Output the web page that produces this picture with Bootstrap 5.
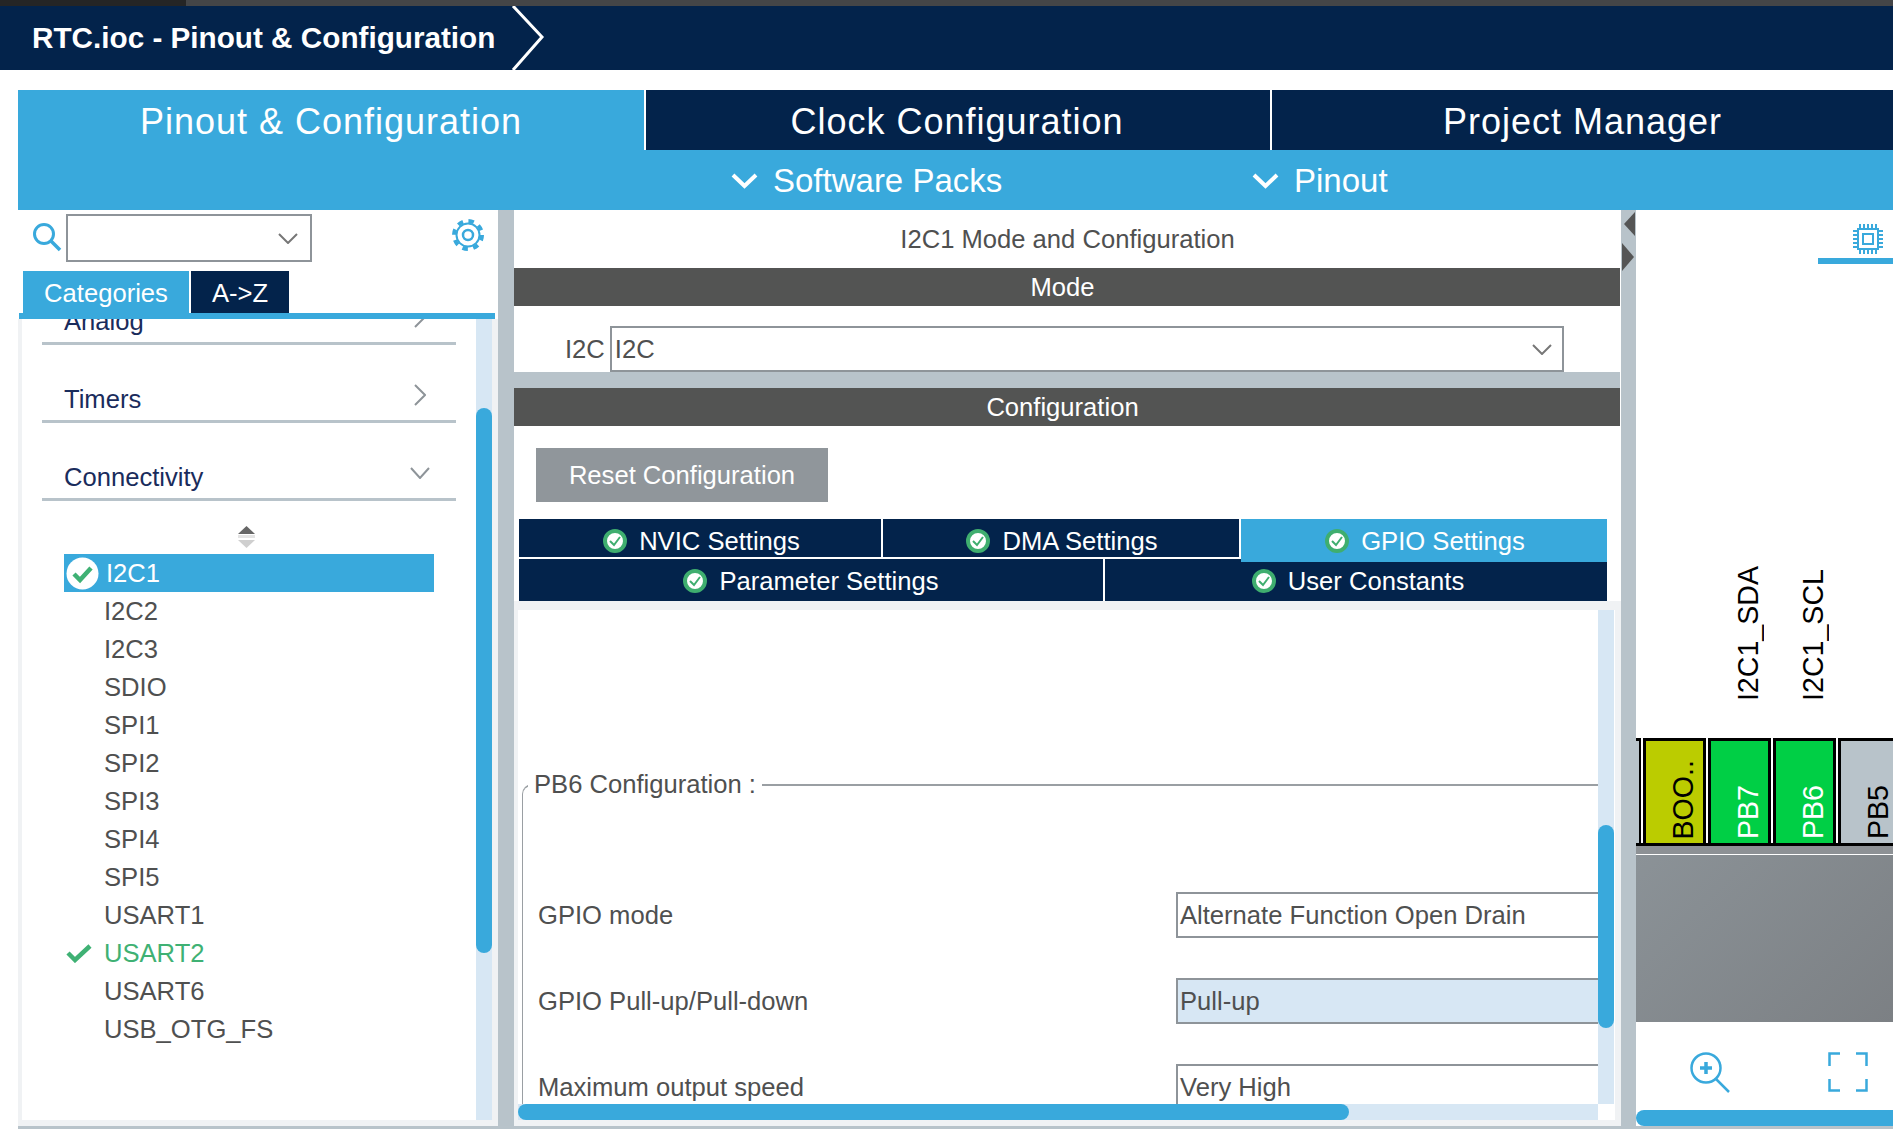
<!DOCTYPE html>
<html lang="en">
<head>
<meta charset="utf-8">
<title>RTC.ioc - Pinout &amp; Configuration</title>
<link href="https://cdn.jsdelivr.net/npm/bootstrap@5.3.0/dist/css/bootstrap.min.css" rel="stylesheet">
<style>
:root{--cube-blue:#39a9dc;--cube-navy:#03234b;--cube-dark:#535453;--cube-gray:#b8c3ca;--cube-border:#8e9499;--cube-track:#d7e7f4;--cube-band:#f0f2f4;--cube-text:#4f5050;}
html,body{margin:0;height:1129px;overflow:hidden;background:#fff;}
body{width:1893px;font-family:"Liberation Sans",Arial,sans-serif;font-size:25.6px;line-height:30px;color:var(--cube-text);}
svg{display:block;flex:none;}
.top-strip{height:6px;background:#444547;}
.top-strip-dark{width:186px;height:6px;background:#252525;}
.title-bar{height:64px;background:var(--cube-navy);color:#fff;font-size:29.7px;padding-left:32px;}
.title-chev{margin-left:16px;}
.title-gap{height:20px;}
.work{margin-left:18px;width:1875px;}
.tab-row{height:60px;gap:2px;}
.main-tab{font-size:36px;letter-spacing:1px;color:#fff;background:var(--cube-navy);padding-top:3px;}
.main-tab.on{background:var(--cube-blue);}
.tab-a{width:626px;}.tab-b{width:624px;padding-right:2px;}.tab-c{width:621px;}
.sub-row{height:60px;background:var(--cube-blue);color:#fff;font-size:33px;padding:2px 0 0 713px;}
.sub-item{gap:15px;}
.sub-first{width:521px;}
.main-area{height:919px;background:var(--cube-gray);margin-left:18px;}
.left-pane{width:480px;height:916px;background:#fff;}
.left-head{height:61px;padding:4px 13px 0 14px;}
.combo-box{border:2px solid var(--cube-border);background:#fff;}
.left-combo{width:246px;height:48px;margin-left:4px;padding-right:12px;}
.cat-tabs{height:42px;padding-left:5px;gap:2px;}
.cat-tab{color:#fff;background:var(--cube-navy);padding-top:2px;}
.cat-tab.on{background:var(--cube-blue);width:166px;}
.cat-az{width:98px;}
.cat-rule{height:6px;background:var(--cube-blue);margin-left:1px;width:476px;}
.left-body{height:807px;background:var(--cube-band);padding:0 6px 6px 4px;}
.left-list{background:#fff;overflow:hidden;}
.v-track{width:16px;background:var(--cube-track);}
.left-thumb{margin-top:89px;height:545px;}
.scroll-thumb{background:var(--cube-blue);border-radius:8px;}
.group-row{height:78px;margin:0 20px;border-bottom:3px solid var(--cube-gray);padding:0 30px 0 22px;color:#1a2c5c;}
.group-first{margin-top:-52px;}
.group-row span{padding-bottom:6px;}
.chev-r{margin-bottom:14px;}
.chev-d{margin-bottom:19px;margin-right:-4px;}
.sort-mark{margin:25px 0 6px 216px;}
.leaf{height:38px;margin-left:42px;width:370px;padding-left:40px;}
.leaf.sel{background:var(--cube-blue);color:#fff;}
.leaf.ok{color:#3fb174;}
.leaf svg{margin-left:-38px;margin-right:7px;}
.leaf.ok svg{margin-right:8px;}
.sep-l{width:16px;}
.sep{width:15px;}
.center-pane{width:1107px;height:916px;background:#fff;}
.pane-title{height:58px;}
.dark-bar{height:38px;background:var(--cube-dark);color:#fff;padding-right:9px;margin-right:1px;}
.mode-row{height:66px;padding-left:51px;gap:5px;}
.mode-combo{width:954px;height:46px;padding:0 10px 0 3px;}
.gap-bar{height:16px;background:var(--cube-gray);margin-right:1px;}
.reset-btn{margin:22px 0 17px 22px;width:292px;height:54px;background:#90969b;color:#fff;}
.tab-stack{margin-left:5px;width:1088px;}
.cfg-tab{background:var(--cube-navy);color:#fff;gap:12px;}
.r1{height:38px;margin-bottom:2px;align-items:flex-start;gap:2px;}
.r1 .cfg-tab{height:38px;padding-top:5px;}
.r1 .cfg-tab.t1{padding-left:3px;}
.r1 .cfg-tab.t2{padding-left:2px;}
.r1 .cfg-tab.on{height:43px;padding:0 0 0 2px;background:var(--cube-blue);position:relative;z-index:1;}
.t1{width:362px;}.t2{width:356px;}.t3{width:366px;}
.r2{height:42px;gap:2px;}
.r2 .cfg-tab{padding-top:2px;}
.r2 .cfg-tab.t5{padding-left:4px;}
.t4{width:584px;}.t5{width:502px;}
.cfg-outer{height:525px;background:var(--cube-band);padding:9px 6px 6px 4px;}
.cfg-grid{display:grid;grid-template-columns:1080px 16px;grid-template-rows:494px 16px;height:510px;background:#fff;}
.cfg-view{overflow:hidden;position:relative;}
.legend-box{margin:174px 0 0 4px;height:400px;border-top:2px solid #9a9fa3;border-left:1px solid #9a9fa3;border-top-left-radius:10px;padding:0 0 0 15px;}
.legend-text{position:absolute;left:10px;top:159px;background:#fff;padding:0 6px 0 6px;}
.cfg-row{height:46px;margin-bottom:40px;}
.cfg-row:first-of-type{margin-top:106px;}
.cfg-label{width:638px;}
.cfg-input{flex:1;height:46px;border:2px solid var(--cube-border);border-right:0;padding-left:2px;}
.cfg-input.tinted{background:var(--cube-track);}
.cfg-thumb{margin-top:215px;height:203px;}
.h-track{background:var(--cube-track);height:16px;}
.h-thumb{width:831px;height:16px;}
.arrow-col{padding-top:2px;}
.arrow-down{margin-top:7px;}
.right-pane{width:257px;height:916px;background:#fff;overflow:hidden;}
.chip-tab{height:54px;padding:14px 10px 0 0;position:relative;}
.chip-rule{position:absolute;right:0;bottom:0;width:75px;height:6px;background:var(--cube-blue);}
.pin-labels{height:474px;padding:0 0 37px 72px;gap:2px;color:#000;}
.pin-name{writing-mode:vertical-rl;transform:rotate(180deg);font-size:28.6px;line-height:32px;}
.pin-slot{width:63px;padding-right:7px;}
.pin-strip{height:108px;border-bottom:3px solid #000;gap:2px;}
.pin-frag{width:5px;flex:none;background:var(--cube-gray);border-right:2px solid #000;border-top:3px solid #000;}
.pin-cell{width:63px;height:105px;border:3px solid #000;border-bottom:0;color:#000;padding:0 4px 4px 0;flex:none;}
.pin-boot{background:#bbcc00;}
.pin-on{background:#00cf45;color:#fff;}
.pin-off{background:var(--cube-gray);}
.pin-rule{height:9px;background:#8d9195;border-bottom:1px solid #fff;}
.chip-body{height:167px;background:linear-gradient(135deg,#8b9297,#7c8084);}
.zoom-bar{height:88px;padding:30px 25px 0 53px;}
.h-thumb-r{height:16px;border-radius:8px 0 0 8px;}
</style>
</head>
<body>
<div class="top-strip"><div class="top-strip-dark"></div></div>
<div class="title-bar d-flex align-items-center fw-bold">
  <span>RTC.ioc - Pinout &amp; Configuration</span>
  <svg class="title-chev" width="36" height="64" viewBox="0 0 36 64"><polyline points="2,0 31,31 2,64" fill="none" stroke="#fff" stroke-width="3"/></svg>
</div>
<div class="title-gap"></div>
<div class="work">
  <div class="tab-row d-flex">
    <div class="main-tab on tab-a d-flex align-items-center justify-content-center">Pinout &amp; Configuration</div>
    <div class="main-tab tab-b d-flex align-items-center justify-content-center">Clock Configuration</div>
    <div class="main-tab tab-c d-flex align-items-center justify-content-center">Project Manager</div>
  </div>
  <div class="sub-row d-flex align-items-center">
    <div class="sub-item sub-first d-flex align-items-center">
      <svg width="27" height="16" viewBox="0 0 27 16"><polyline points="2,2 13.5,13 25,2" fill="none" stroke="#fff" stroke-width="4"/></svg>
      <span>Software Packs</span>
    </div>
    <div class="sub-item d-flex align-items-center">
      <svg width="27" height="16" viewBox="0 0 27 16"><polyline points="2,2 13.5,13 25,2" fill="none" stroke="#fff" stroke-width="4"/></svg>
      <span>Pinout</span>
    </div>
  </div>
</div>
<div class="main-area d-flex">
  <div class="left-pane">
    <div class="left-head d-flex align-items-start">
      <svg class="mt-2" width="30" height="30" viewBox="0 0 30 30"><circle cx="12" cy="12" r="9.5" fill="none" stroke="#39a9dc" stroke-width="3"/><line x1="19" y1="19" x2="28" y2="28" stroke="#39a9dc" stroke-width="3.5"/></svg>
      <div class="combo-box left-combo d-flex align-items-center justify-content-end">
        <svg width="20" height="11" viewBox="0 0 20 11"><polyline points="1,1 10,10 19,1" fill="none" stroke="#777" stroke-width="2"/></svg>
      </div>
      <svg class="ms-auto mt-1" width="34" height="34" viewBox="0 0 34 34" fill="none" stroke="#39a9dc"><circle cx="17" cy="17" r="14" stroke-width="4" stroke-dasharray="5.5 5.5"/><circle cx="17" cy="17" r="11.5" stroke-width="2"/><circle cx="17" cy="17" r="5" stroke-width="2.5"/></svg>
    </div>
    <div class="cat-tabs d-flex">
      <div class="cat-tab on d-flex align-items-center justify-content-center">Categories</div>
      <div class="cat-tab cat-az d-flex align-items-center justify-content-center">A-&gt;Z</div>
    </div>
    <div class="cat-rule"></div>
    <div class="left-body d-flex">
      <div class="left-list flex-grow-1">
        <div class="group-row group-first d-flex align-items-end justify-content-between"><span>Analog</span>
          <svg class="chev-r" width="12" height="22" viewBox="0 0 12 22"><polyline points="1,1 11,11 1,21" fill="none" stroke="#8e9499" stroke-width="2"/></svg></div>
        <div class="group-row d-flex align-items-end justify-content-between"><span>Timers</span>
          <svg class="chev-r" width="12" height="22" viewBox="0 0 12 22"><polyline points="1,1 11,11 1,21" fill="none" stroke="#8e9499" stroke-width="2"/></svg></div>
        <div class="group-row d-flex align-items-end justify-content-between"><span>Connectivity</span>
          <svg class="chev-d" width="20" height="12" viewBox="0 0 20 12"><polyline points="1,1 10,11 19,1" fill="none" stroke="#8e9499" stroke-width="2"/></svg></div>
        <svg class="sort-mark" width="17" height="22" viewBox="0 0 17 22"><polygon points="8.5,0 17,8 0,8" fill="#666"/><rect y="9" width="17" height="3" fill="#e4e4e4"/><polygon points="0,14 17,14 8.5,22" fill="#cfcfcf"/></svg>
        <div class="leaf sel d-flex align-items-center">
          <svg width="33" height="33" viewBox="0 0 33 33"><circle cx="16.5" cy="16.5" r="16" fill="#fff"/><polyline points="8,17 14,23 25,11" fill="none" stroke="#3fb174" stroke-width="4.5"/></svg>I2C1</div>
        <div class="leaf d-flex align-items-center">I2C2</div>
        <div class="leaf d-flex align-items-center">I2C3</div>
        <div class="leaf d-flex align-items-center">SDIO</div>
        <div class="leaf d-flex align-items-center">SPI1</div>
        <div class="leaf d-flex align-items-center">SPI2</div>
        <div class="leaf d-flex align-items-center">SPI3</div>
        <div class="leaf d-flex align-items-center">SPI4</div>
        <div class="leaf d-flex align-items-center">SPI5</div>
        <div class="leaf d-flex align-items-center">USART1</div>
        <div class="leaf ok d-flex align-items-center">
          <svg width="26" height="20" viewBox="0 0 26 20"><polyline points="2,10 9,17 24,3" fill="none" stroke="#3fb174" stroke-width="4.5"/></svg><span class="ps-1">USART2</span></div>
        <div class="leaf d-flex align-items-center">USART6</div>
        <div class="leaf d-flex align-items-center">USB_OTG_FS</div>
      </div>
      <div class="v-track"><div class="scroll-thumb left-thumb"></div></div>
    </div>
  </div>
  <div class="sep-l"></div>
  <div class="center-pane">
    <div class="pane-title d-flex align-items-center justify-content-center">I2C1 Mode and Configuration</div>
    <div class="dark-bar d-flex align-items-center justify-content-center">Mode</div>
    <div class="mode-row d-flex align-items-end">
      <span class="mb-2">I2C</span>
      <div class="combo-box mode-combo d-flex align-items-center justify-content-between"><span>I2C</span>
        <svg width="20" height="11" viewBox="0 0 20 11"><polyline points="1,1 10,10 19,1" fill="none" stroke="#777" stroke-width="2"/></svg></div>
    </div>
    <div class="gap-bar"></div>
    <div class="dark-bar d-flex align-items-center justify-content-center">Configuration</div>
    <div class="reset-btn d-flex align-items-center justify-content-center">Reset Configuration</div>
    <div class="tab-stack">
      <div class="r1 d-flex">
        <div class="cfg-tab t1 d-flex align-items-center justify-content-center"><svg width="24" height="24" viewBox="0 0 24 24"><circle cx="12" cy="12" r="10" fill="#fff" stroke="#3fae6f" stroke-width="4"/><polyline points="7,12 11,16 17,8" fill="none" stroke="#3fae6f" stroke-width="2"/></svg>NVIC Settings</div>
        <div class="cfg-tab t2 d-flex align-items-center justify-content-center"><svg width="24" height="24" viewBox="0 0 24 24"><circle cx="12" cy="12" r="10" fill="#fff" stroke="#3fae6f" stroke-width="4"/><polyline points="7,12 11,16 17,8" fill="none" stroke="#3fae6f" stroke-width="2"/></svg>DMA Settings</div>
        <div class="cfg-tab on t3 d-flex align-items-center justify-content-center"><svg width="24" height="24" viewBox="0 0 24 24"><circle cx="12" cy="12" r="10" fill="#fff" stroke="#3fae6f" stroke-width="4"/><polyline points="7,12 11,16 17,8" fill="none" stroke="#3fae6f" stroke-width="2"/></svg>GPIO Settings</div>
      </div>
      <div class="r2 d-flex">
        <div class="cfg-tab t4 d-flex align-items-center justify-content-center"><svg width="24" height="24" viewBox="0 0 24 24"><circle cx="12" cy="12" r="10" fill="#fff" stroke="#3fae6f" stroke-width="4"/><polyline points="7,12 11,16 17,8" fill="none" stroke="#3fae6f" stroke-width="2"/></svg>Parameter Settings</div>
        <div class="cfg-tab t5 d-flex align-items-center justify-content-center"><svg width="24" height="24" viewBox="0 0 24 24"><circle cx="12" cy="12" r="10" fill="#fff" stroke="#3fae6f" stroke-width="4"/><polyline points="7,12 11,16 17,8" fill="none" stroke="#3fae6f" stroke-width="2"/></svg>User Constants</div>
      </div>
    </div>
    <div class="cfg-outer">
      <div class="cfg-grid">
        <div class="cfg-view">
          <div class="legend-box">
            <div class="cfg-row d-flex align-items-center"><div class="cfg-label">GPIO mode</div><div class="cfg-input d-flex align-items-center">Alternate Function Open Drain</div></div>
            <div class="cfg-row d-flex align-items-center"><div class="cfg-label">GPIO Pull-up/Pull-down</div><div class="cfg-input tinted d-flex align-items-center">Pull-up</div></div>
            <div class="cfg-row d-flex align-items-center"><div class="cfg-label">Maximum output speed</div><div class="cfg-input d-flex align-items-center">Very High</div></div>
          </div>
          <div class="legend-text">PB6 Configuration :</div>
        </div>
        <div class="v-track"><div class="scroll-thumb cfg-thumb"></div></div>
        <div class="h-track"><div class="scroll-thumb h-thumb"></div></div>
        <div></div>
      </div>
    </div>
  </div>
  <div class="sep arrow-col d-flex flex-column align-items-center">
    <svg width="12" height="24" viewBox="0 0 12 24"><polygon points="12,0 12,24 1,12" fill="#555"/></svg>
    <svg class="arrow-down" width="13" height="28" viewBox="0 0 13 28"><polygon points="0,0 12,14 0,28" fill="#555"/></svg>
  </div>
  <div class="right-pane">
    <div class="chip-tab d-flex justify-content-end">
      <svg width="30" height="30" viewBox="0 0 30 30" fill="none" stroke="#39a9dc"><rect x="5" y="5" width="20" height="20" stroke-width="2"/><rect x="10" y="10" width="10" height="10" stroke-width="2"/><path d="M7 0v4M11 0v4M15 0v4M19 0v4M23 0v4M7 26v4M11 26v4M15 26v4M19 26v4M23 26v4M0 7h4M0 11h4M0 15h4M0 19h4M0 23h4M26 7h4M26 11h4M26 15h4M26 19h4M26 23h4" stroke-width="2"/></svg>
      <div class="chip-rule"></div>
    </div>
    <div class="pin-labels d-flex align-items-end">
      <div class="pin-slot d-flex justify-content-end"><span class="pin-name">I2C1_SDA</span></div>
      <div class="pin-slot d-flex justify-content-end"><span class="pin-name">I2C1_SCL</span></div>
    </div>
    <div class="pin-strip d-flex">
      <div class="pin-frag"></div>
      <div class="pin-cell pin-boot d-flex justify-content-end align-items-end"><span class="pin-name">BOO..</span></div>
      <div class="pin-cell pin-on d-flex justify-content-end align-items-end"><span class="pin-name">PB7</span></div>
      <div class="pin-cell pin-on d-flex justify-content-end align-items-end"><span class="pin-name">PB6</span></div>
      <div class="pin-cell pin-off d-flex justify-content-end align-items-end"><span class="pin-name">PB5</span></div>
    </div>
    <div class="pin-rule"></div>
    <div class="chip-body"></div>
    <div class="zoom-bar d-flex justify-content-between">
      <svg width="42" height="42" viewBox="0 0 42 42" fill="none" stroke="#39a9dc" stroke-width="2.5"><circle cx="17" cy="16" r="14.5"/><line x1="27" y1="27" x2="40" y2="40"/><path d="M17 10v12M11 16h12" stroke-width="3.5"/></svg>
      <svg width="40" height="40" viewBox="0 0 40 40" fill="none" stroke="#39a9dc" stroke-width="2.5"><path d="M12 1.5H1.5V14M28 1.5H38.5V14M12 38.5H1.5V27M28 38.5H38.5V27"/></svg>
    </div>
    <div class="scroll-thumb h-thumb-r"></div>
  </div>
</div>
<script src="https://cdn.jsdelivr.net/npm/bootstrap@5.3.0/dist/js/bootstrap.bundle.min.js"></script>
</body>
</html>
